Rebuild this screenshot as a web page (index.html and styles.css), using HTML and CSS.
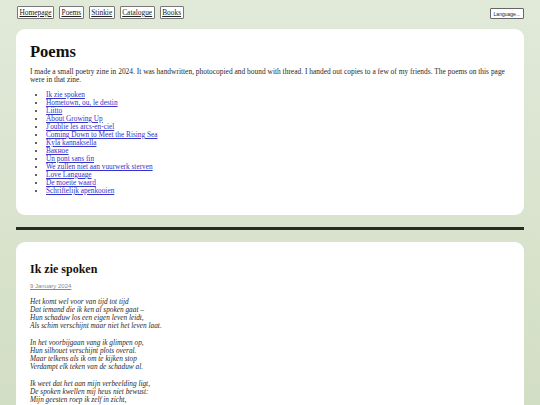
FILE: index.html
```html
<!DOCTYPE html>
<html lang="en">
<head>
<meta charset="utf-8">
<title>Poems</title>
<link rel="stylesheet" href="styles.css">
</head>
<body>
<header class="topbar">
  <nav class="nav">
    <a class="navbtn" href="#">Homepage</a>
    <a class="navbtn" href="#">Poems</a>
    <a class="navbtn" href="#">Stinkie</a>
    <a class="navbtn" href="#">Catalogue</a>
    <a class="navbtn" href="#">Books</a>
  </nav>
  <button class="lang" type="button">Language...</button>
</header>
<main class="main">
  <section class="card intro">
    <h1 class="title">Poems</h1>
    <p class="lead">I made a small poetry zine in 2024. It was handwritten, photocopied and bound with thread. I handed out copies to a few of my friends. The poems on this page were in that zine.</p>
    <ul class="toc">
      <li><a href="#">Ik zie spoken</a></li>
      <li><a href="#">Hometown, ou, le destin</a></li>
      <li><a href="#">Liitto</a></li>
      <li><a href="#">About Growing Up</a></li>
      <li><a href="#">J'oublie les arcs-en-ciel</a></li>
      <li><a href="#">Coming Down to Meet the Rising Sea</a></li>
      <li><a href="#">Kylä kannaksella</a></li>
      <li><a href="#">Вакное</a></li>
      <li><a href="#">Un pont sans fin</a></li>
      <li><a href="#">We zullen niet aan vuurwerk sterven</a></li>
      <li><a href="#">Love Language</a></li>
      <li><a href="#">De moeite waard</a></li>
      <li><a href="#">Schriftelijk apenkooien</a></li>
    </ul>
  </section>
  <hr class="divider">
  <article class="card poem">
    <h2 class="poem-title">Ik zie spoken</h2>
    <p class="date"><a href="#">9 January 2024</a></p>
    <div class="verse">
      <p>Het komt wel voor van tijd tot tijd<br>Dat iemand die ik ken al spoken gaat –<br>Hun schaduw los een eigen leven leidt,<br>Als schim verschijnt maar niet het leven laat.</p>
      <p>In het voorbijgaan vang ik glimpen op,<br>Hun silhouet verschijnt plots overal.<br>Maar telkens als ik om te kijken stop<br>Verdampt elk teken van de schaduw al.</p>
      <p>Ik weet dat het aan mijn verbeelding ligt,<br>De spoken kwellen mij heus niet bewust:<br>Mijn geesten roep ik zelf in zicht,</p>
    </div>
  </article>
</main>
</body>
</html>
```
FILE: styles.css
```css
html, body {
  margin: 0;
  padding: 0;
}
body {
  min-height: 405px;
  background: linear-gradient(#e1e9d9, #d2dec4) fixed;
  font-family: "Liberation Serif", Georgia, serif;
  color: #2a2a2a;
  overflow: hidden;
}
.topbar {
  display: flex;
  justify-content: space-between;
  align-items: center;
  padding: 6px 16px 0 17px;
  height: 13px;
}
.nav {
  display: flex;
  gap: 5px;
}
.navbtn {
  display: block;
  background: #fff;
  border: 1px solid #777;
  border-radius: 1px;
  padding: 1px 1.5px;
  font-size: 7.4px;
  line-height: 9px;
  color: #222;
}
.lang {
  background: #fff;
  border: 1px solid #666;
  border-radius: 1px;
  padding: 0 3px;
  height: 11px;
  font-family: "Liberation Sans", Arial, sans-serif;
  font-size: 5px;
  color: #222;
  margin-top: 2px;
}
.main {
  padding: 10px 16px 0;
}
.card {
  background: #fff;
  border-radius: 9px;
  padding: 14px 14px 20px;
}
.title {
  margin: 0;
  font-size: 16.5px;
  line-height: 18px;
  font-weight: bold;
  color: #111;
}
.lead {
  font-size: 7.45px;
  line-height: 8px;
  margin: 7px 0 7px;
}
.toc {
  margin: 0;
  padding-left: 16px;
  font-size: 7.3px;
  line-height: 8px;
}
.toc a {
  color: #3434cc;
}
.divider {
  border: 0;
  height: 3px;
  background: #262b24;
  margin: 12px 0 12px;
}
.poem {
  padding-top: 20px;
}
.poem-title {
  margin: 0;
  font-size: 12px;
  line-height: 14px;
  color: #111;
}
.date {
  margin: 6px 0 8px;
  font-family: "Liberation Sans", Arial, sans-serif;
  font-size: 6px;
  line-height: 8px;
}
.date a {
  color: #888;
}
.verse {
  font-style: italic;
  font-size: 7.3px;
  line-height: 8px;
}
.verse p {
  margin: 0 0 9px;
}
```
